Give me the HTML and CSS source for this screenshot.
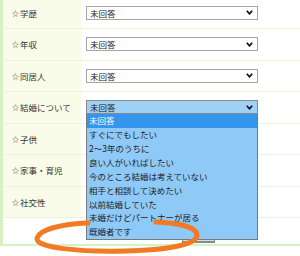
FILE: index.html
```html
<!DOCTYPE html>
<html lang="ja">
<head>
<meta charset="utf-8">
<title>プロフィール</title>
<link rel="stylesheet" href="styles.css">
</head>
<body>
<div class="form">
  <div class="row">
    <div class="label"><span class="star">☆</span>学歴</div>
    <div class="value"><div class="select"><span>未回答</span><svg class="chev" viewBox="0 0 7 5"><polyline points="0.8,0.8 3.5,3.8 6.2,0.8"/></svg></div></div>
  </div>
  <div class="row">
    <div class="label"><span class="star">☆</span>年収</div>
    <div class="value"><div class="select"><span>未回答</span><svg class="chev" viewBox="0 0 7 5"><polyline points="0.8,0.8 3.5,3.8 6.2,0.8"/></svg></div></div>
  </div>
  <div class="row">
    <div class="label"><span class="star">☆</span>同居人</div>
    <div class="value"><div class="select"><span>未回答</span><svg class="chev" viewBox="0 0 7 5"><polyline points="0.8,0.8 3.5,3.8 6.2,0.8"/></svg></div></div>
  </div>
  <div class="row">
    <div class="label"><span class="star">☆</span>結婚について</div>
    <div class="value">
      <div class="select active"><span>未回答</span><svg class="chev" viewBox="0 0 7 5"><polyline points="0.8,0.8 3.5,3.8 6.2,0.8"/></svg></div>
      <ul class="dropdown">
        <li class="sel">未回答</li>
        <li>すぐにでもしたい</li>
        <li>2〜3年のうちに</li>
        <li>良い人がいればしたい</li>
        <li>今のところ結婚は考えていない</li>
        <li>相手と相談して決めたい</li>
        <li>以前結婚していた</li>
        <li>未婚だけどパートナーが居る</li>
        <li>既婚者です</li>
      </ul>
    </div>
  </div>
  <div class="row">
    <div class="label"><span class="star">☆</span>子供</div>
    <div class="value"></div>
  </div>
  <div class="row">
    <div class="label"><span class="star">☆</span>家事・育児</div>
    <div class="value"></div>
  </div>
  <div class="row">
    <div class="label"><span class="star">☆</span>社交性</div>
    <div class="value"></div>
  </div>
  <div class="row last">
    <div class="label"></div>
    <div class="value"><div class="button"></div></div>
  </div>
</div>
<svg class="annotation" viewBox="0 0 300 256" width="300" height="256">
  <path d="M88 223 C62 224 40 229 37 238 C35 248 80 252 125 251 C165 250 197 245 197 235 C197 227 178 223 156 222"/>
</svg>
</body>
</html>
```

FILE: styles.css
```css
html, body {
  margin: 0;
  background: #ffffff;
}

body {
  position: relative;
  width: 300px;
  height: 256px;
  overflow: hidden;
  font-family: "Noto Sans CJK JP", "Noto Sans", sans-serif;
  font-size: 8.5px;
  color: #333333;
}

.form {
  margin-top: -2.5px;
  border-left: 3px solid #d6f2c3;
  border-bottom: 2px solid #d6f2c3;
}

.row {
  display: grid;
  grid-template-columns: 78px 1fr;
  height: 31.5px;
  box-sizing: border-box;
  border-bottom: 1px solid #eef1dc;
}

.label {
  display: flex;
  align-items: center;
  padding-left: 9px;
  background: #fafcea;
  white-space: nowrap;
}

.star {
  font-size: 7px;
  margin-right: 1px;
}

.value {
  position: relative;
  display: flex;
  align-items: center;
  padding-left: 5px;
}

.select {
  width: 172px;
  height: 14px;
  box-sizing: border-box;
  border: 1px solid #a6a6a6;
  background: #ffffff;
  display: flex;
  align-items: center;
  justify-content: space-between;
  padding: 0 4px 0 3px;
  line-height: 1;
  color: #222222;
}

.chev {
  width: 7px;
  height: 5px;
}

.chev polyline {
  fill: none;
  stroke: #111111;
  stroke-width: 1.7;
}

.select.active {
  background: #9fd0f6;
  border-color: #8a8a8a;
}

.dropdown {
  position: absolute;
  z-index: 5;
  left: 5px;
  top: calc(50% + 7px);
  width: 172px;
  margin: 0;
  padding: 0;
  list-style: none;
  box-sizing: border-box;
  background: #8ec9f7;
  border: 1px solid #7a7a7a;
  border-top: none;
  color: #222222;
}

.dropdown li {
  height: 13.9px;
  line-height: 13.9px;
  padding-left: 2px;
  white-space: nowrap;
}

.dropdown li.sel {
  background: #3395ec;
  color: #ffffff;
}

.row.last {
  height: 26px;
  border-bottom: none;
}

.row.last .label {
  background: #ffffff;
}

.row.last .value {
  align-items: flex-end;
}

.button {
  width: 33px;
  height: 16px;
  margin: 0 0 1px 96px;
  box-sizing: border-box;
  background: #dddddd;
  border: 1px solid #8a8a8a;
  border-bottom-width: 2px;
}

.annotation {
  position: absolute;
  z-index: 10;
  top: 0;
  left: 0;
  pointer-events: none;
}

.annotation path {
  fill: none;
  stroke: #f27a24;
  stroke-width: 5;
  stroke-linecap: round;
}
```
